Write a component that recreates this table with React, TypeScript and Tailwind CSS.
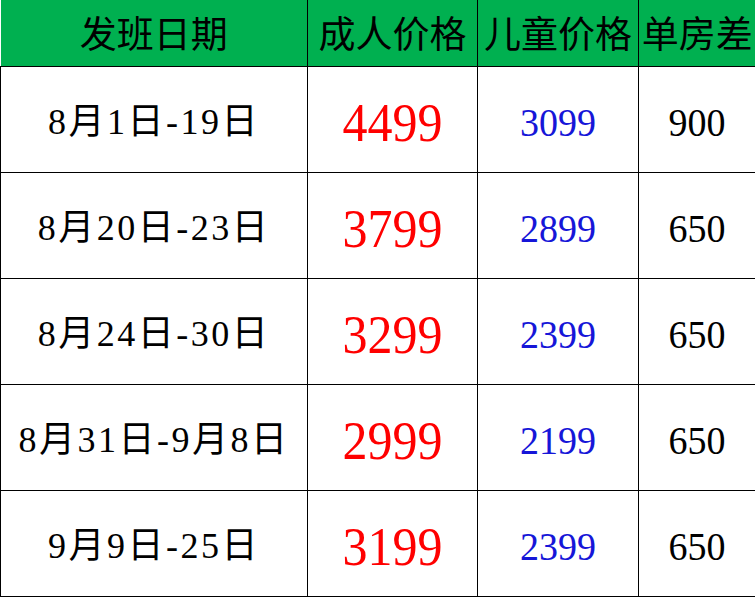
const rows = [
  { date: '8月1日-19日', adult: '4499', child: '3099', single: '900' },
  { date: '8月20日-23日', adult: '3799', child: '2899', single: '650' },
  { date: '8月24日-30日', adult: '3299', child: '2399', single: '650' },
  { date: '8月31日-9月8日', adult: '2999', child: '2199', single: '650' },
  { date: '9月9日-25日', adult: '3199', child: '2399', single: '650' },
];

const font = { fontFamily: '"Liberation Serif", "Noto Sans CJK SC", serif' };

export default function App() {
  return (
    <div className="w-[755px] h-[597px] bg-white overflow-hidden" style={font}>
      <table className="w-[755px] table-fixed border-collapse">
        <colgroup>
          <col className="w-[307px]" />
          <col className="w-[170px]" />
          <col className="w-[161px]" />
          <col className="w-[117px]" />
        </colgroup>
        <thead>
          <tr className="h-[66px] bg-[#00b050]">
            {['发班日期', '成人价格', '儿童价格', '单房差'].map((h, i) => (
              <th
                key={h}
                className={`border-b border-black text-[37px] font-normal text-black text-center whitespace-nowrap p-0 pt-[6px] leading-none ${
                  i < 3 ? 'border-r' : ''
                }`}
              >
                {h}
              </th>
            ))}
          </tr>
        </thead>
        <tbody>
          {rows.map((r) => (
            <tr key={r.date} className="h-[106px]">
              <td className="border border-black text-center text-[36px] text-black whitespace-nowrap p-0 pt-[5px] leading-none tracking-[2.5px]">
                {r.date}
              </td>
              <td className="border border-black text-center text-[50px] text-[#ff0000] p-0 pt-[5px] leading-none">
                <span className="inline-block scale-y-110">{r.adult}</span>
              </td>
              <td className="border border-black text-center text-[38px] text-[#1616d8] p-0 pt-[5px] leading-none">
                <span className="inline-block scale-y-105">{r.child}</span>
              </td>
              <td className="border border-black text-center text-[38px] text-black p-0 pt-[5px] leading-none">
                <span className="inline-block scale-y-105">{r.single}</span>
              </td>
            </tr>
          ))}
        </tbody>
      </table>
    </div>
  );
}
